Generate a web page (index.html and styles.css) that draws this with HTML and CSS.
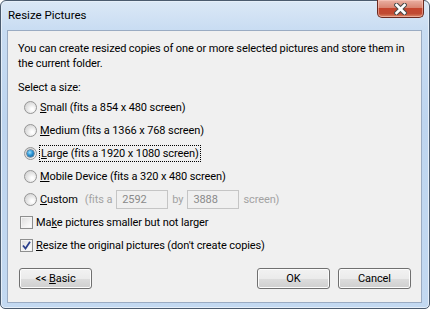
FILE: index.html
```html
<!DOCTYPE html>
<html lang="en">
<head>
  <meta charset="UTF-8" />
  <title>Resize Pictures</title>
  <link rel="stylesheet" href="styles.css">
</head>
<body>
  <div class="window">
    <div class="titlebar">
      <div class="title">Resize Pictures</div>
      <div class="close">
        <svg width="13" height="12" viewBox="0 0 13 12">
          <path d="M2.5 2 L10.5 10 M10.5 2 L2.5 10" stroke="#4a4a4a" stroke-width="4.6" stroke-linecap="square"/>
          <path d="M2.5 2 L10.5 10 M10.5 2 L2.5 10" stroke="#fff" stroke-width="2.6" stroke-linecap="square"/>
        </svg>
      </div>
    </div>
    <div class="client">
      <p class="intro">You can create resized copies of one or more selected pictures and store them in the current folder.</p>
      <div class="label">Select a size:</div>
      <div class="sizes">
        <div class="row"><span class="radio"></span><span><u>S</u>mall (fits a 854 x 480 screen)</span></div>
        <div class="row"><span class="radio"></span><span><u>M</u>edium (fits a 1366 x 768 screen)</span></div>
        <div class="row"><span class="radio checked"></span><span class="focus"><u>L</u>arge (fits a 1920 x 1080 screen)</span></div>
        <div class="row"><span class="radio"></span><span><u>M</u>obile Device (fits a 320 x 480 screen)</span></div>
        <div class="row"><span class="radio"></span><span><u>C</u>ustom</span>
          <span class="dim fits">(fits a</span>
          <span class="field">2592</span>
          <span class="dim">by</span>
          <span class="field">3888</span>
          <span class="dim">screen)</span>
        </div>
      </div>
      <div class="row check-row"><span class="check"></span><span>Ma<u>k</u>e pictures smaller but not larger</span></div>
      <div class="row check-row"><span class="check">
        <svg width="9" height="9" viewBox="0 0 9 9"><path d="M1 4.5 L3.5 7.5 L8 0.8" fill="none" stroke="#2a3f8c" stroke-width="1.8"/></svg>
      </span><span><u>R</u>esize the original pictures (don't create copies)</span></div>
      <div class="buttons">
        <button class="btn">&lt;&lt; <u>B</u>asic</button>
        <span class="spacer"></span>
        <button class="btn">OK</button>
        <button class="btn">Cancel</button>
      </div>
    </div>
  </div>
</body>
</html>
```
FILE: styles.css
```css
body {
  margin: 0;
  font-family: Roboto, "Liberation Sans", sans-serif;
  font-size: 11px;
  letter-spacing: -0.1px;
  color: #000;
  background: #fff;
}
.window {
  box-sizing: border-box;
  width: 430px;
  height: 309px;
  border: 1px solid #4b5b6e;
  border-radius: 6px 6px 5px 5px;
  background: linear-gradient(#dbe8f6, #c8dcf2 30px, #bed5ef 120px, #c3d9f1);
  box-shadow: inset 0 0 0 1px #e6eff9;
  display: flex;
  flex-direction: column;
}
.titlebar {
  height: 29px;
  display: flex;
  justify-content: space-between;
  align-items: flex-start;
}
.title {
  font-size: 11.5px;
  padding: 7px 0 0 7px;
  letter-spacing: 0;
}
.close {
  width: 47px;
  height: 18px;
  margin: -1px 5px 0 0;
  box-sizing: border-box;
  border: 1px solid #6b2a20;
  border-top: none;
  border-radius: 0 0 5px 5px;
  background: linear-gradient(#eab0a3, #d98572 45%, #c5452e 50%, #c04a32 80%, #dd8a6a);
  box-shadow: inset 0 0 0 1px rgba(255, 210, 200, 0.5);
  display: flex;
  align-items: center;
  justify-content: center;
}
.client {
  box-sizing: border-box;
  width: 415px;
  height: 273px;
  margin-left: 6px;
  border: 1px solid #9aabc2;
  background: #f0f0f0;
  padding: 10px 10px 0 10px;
}
.intro {
  margin: 0;
  line-height: 15px;
}
.label {
  margin-top: 9px;
  line-height: 15px;
}
.sizes {
  padding-left: 6px;
  margin-top: 1px;
}
.row {
  height: 23px;
  display: flex;
  align-items: center;
  white-space: nowrap;
}
.radio {
  box-sizing: border-box;
  width: 13px;
  height: 13px;
  border-radius: 50%;
  border: 1px solid #959595;
  background: radial-gradient(circle at 65% 65%, #ffffff 10%, #e8e8e8 45%, #c9c9c9);
  margin-right: 3px;
  display: flex;
  align-items: center;
  justify-content: center;
}
.radio.checked::after {
  content: "";
  width: 7px;
  height: 7px;
  border-radius: 50%;
  background: radial-gradient(circle at 40% 35%, #9fe3ff, #2a93d4 45%, #0f4d7e);
  box-shadow: 0 0 0 0.5px #1e3d5a;
}
.focus {
  outline: 1px dotted #000;
  outline-offset: 0;
  padding: 0 1px;
  line-height: 15px;
}
.dim {
  color: #a3a3a3;
  margin: 0 4px;
}
.fits {
  margin-left: 7px;
}
.field {
  box-sizing: border-box;
  width: 52px;
  height: 19px;
  border: 1px solid #c5c5c5;
  background: #f0f0f0;
  color: #8a8a8a;
  padding: 2px 0 0 5px;
  line-height: 13px;
}
.check-row {
  padding-left: 2px;
}
.check {
  box-sizing: border-box;
  width: 13px;
  height: 13px;
  border: 1px solid #8e8f8f;
  background: linear-gradient(135deg, #dcdcdc, #f6f6f6 70%, #fff);
  box-shadow: inset 0 0 0 1px #f4f4f4;
  margin-right: 3px;
  display: flex;
  align-items: center;
  justify-content: center;
}
.buttons {
  display: flex;
  gap: 8px;
  margin-top: 11px;
  padding-left: 1px;
}
.spacer {
  flex: 1;
}
.btn {
  box-sizing: border-box;
  width: 73px;
  height: 21px;
  font: inherit;
  letter-spacing: inherit;
  color: #000;
  border: 1px solid #707070;
  border-radius: 3px;
  background: linear-gradient(#f2f2f2, #ebebeb 50%, #dddddd 50%, #cfcfcf);
  box-shadow: inset 0 0 0 1px #fcfcfc;
  padding: 0;
}
```
